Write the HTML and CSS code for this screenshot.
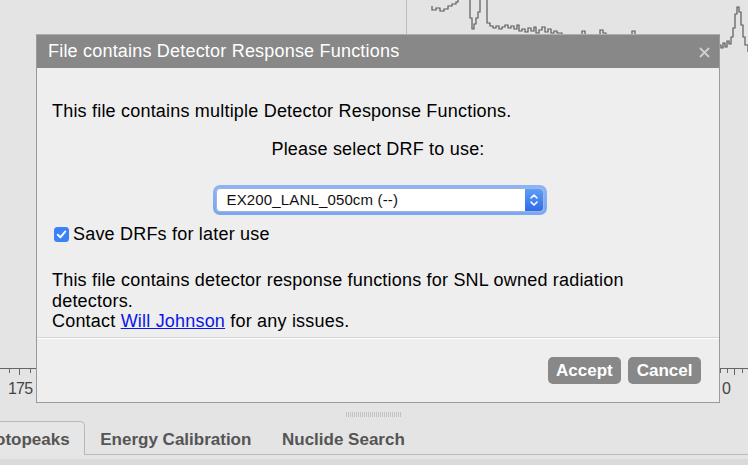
FILE: index.html
```html
<!DOCTYPE html>
<html>
<head>
<meta charset="utf-8">
<link rel="stylesheet" href="styles.css">
</head>
<body>
<div class="app">
  <div class="chart">
    <svg class="plot" width="748" height="407" viewBox="0 0 748 407">
      <line x1="406.5" y1="0" x2="406.5" y2="40" class="grid"/>
      <path class="spectrum" d="M432,6 V10 H436 V8 H440 V11 H444 V9 H448 V6 H452 V4 H456 V2 H458 V0
        M470,0 V18 H472 V29 H474 V24 H476 V18 H478 V12 H480 V0
        M487,0 V23 H490 V26 H493 V28 H496 V26 H499 V29 H502 V27 H505 V25 H508 V28 H511 V26 H514 V29 H517 V25 H519 V31 H522 V29 H525 V32 H528 V28 H531 V31 H534 V27 H536 V33 H539 V30 H542 V27 H545 V32 H548 V29 H551 V33 H554 V31 H557 V33 H562 V34
        M582,34 V31 H585 V34 M600,34 V30 H603 V33 H606 V34 M632,34 V31 H635 V34
        M719,45 H721 V48 H723 V43 H725 V47 H727 V41 H729 V44 H731 V37 H733 V28 H735 V14 H737 V7 H739 V12 H741 V25 H743 V37 H745 V45 H748 V52"/>
      <line x1="0" y1="368.5" x2="748" y2="368.5" class="axis"/>
      <path class="axis" d="M9.5,368 V373 M19.5,368 V375 M30.5,368 V373 M720.5,368 V373 M727.5,368 V373 M734.5,368 V375 M742.5,368 V373"/>
      <text x="8" y="394" class="tick-label">175</text>
      <text x="722" y="394" class="tick-label">0</text>
    </svg>
  </div>
  <div class="resizer"><div class="grip"></div></div>
  <div class="tabbar">
    <div class="tabs">
      <div class="tab active">Photopeaks</div>
      <div class="tab">Energy Calibration</div>
      <div class="tab">Nuclide Search</div>
    </div>
  </div>
  <div class="statusband"></div>
</div>

<div class="dialog">
  <div class="dlg-header">
    <span class="dlg-title">File contains Detector Response Functions</span>
    <span class="dlg-close">
      <svg width="11" height="11" viewBox="0 0 11 11"><path d="M1,1 L10,10 M10,1 L1,10" stroke="#cfcfcf" stroke-width="1.8" fill="none"/></svg>
    </span>
  </div>
  <div class="dlg-body">
    <p class="intro">This file contains multiple Detector Response Functions.</p>
    <p class="prompt">Please select DRF to use:</p>
    <div class="select-row">
      <div class="select-ring">
        <div class="select">
          <span class="select-value">EX200_LANL_050cm (--)</span>
          <span class="select-arrows">
            <svg width="18" height="22" viewBox="0 0 18 22"><path d="M6,9 L9,6 L12,9 M6,13 L9,16 L12,13" stroke="#fff" stroke-width="1.6" fill="none" stroke-linecap="round" stroke-linejoin="round"/></svg>
          </span>
        </div>
      </div>
    </div>
    <label class="check-row">
      <span class="checkbox"><svg width="15" height="15" viewBox="0 0 15 15"><path d="M3.8,7.8 L6.3,10.3 L11.2,4.6" stroke="#fff" stroke-width="2" fill="none" stroke-linecap="round" stroke-linejoin="round"/></svg></span>
      <span>Save DRFs for later use</span>
    </label>
    <p class="note">This file contains detector response functions for SNL owned radiation detectors.<br>Contact <a href="#" class="link">Will Johnson</a> for any issues.</p>
  </div>
  <div class="dlg-footer">
    <button class="btn">Accept</button>
    <button class="btn">Cancel</button>
  </div>
</div>
</body>
</html>
```

FILE: styles.css
```css
html, body {
  margin: 0;
  padding: 0;
}
body {
  width: 748px;
  height: 465px;
  overflow: hidden;
  background: #e4e4e4;
  font-family: "Liberation Sans", Arial, sans-serif;
  position: relative;
}
.app {
  display: flex;
  flex-direction: column;
  height: 465px;
}
.chart {
  height: 407px;
}
.plot {
  display: block;
}
.grid {
  stroke: #bdbdbd;
  stroke-width: 1;
}
.spectrum {
  fill: none;
  stroke: #5a5a5a;
  stroke-width: 1.2;
}
.axis {
  stroke: #666;
  stroke-width: 1;
  fill: none;
}
.tick-label {
  font-family: "Liberation Sans", Arial, sans-serif;
  font-size: 16px;
  letter-spacing: -0.8px;
  fill: #444;
}
.resizer {
  height: 14px;
  display: flex;
  justify-content: center;
}
.grip {
  margin-top: 5px;
  width: 56px;
  height: 5px;
  background: repeating-linear-gradient(90deg, #c2c2c2 0 1px, transparent 1px 2px);
}
.tabbar {
  height: 33px;
  border-bottom: 1px solid #bcbcbc;
  overflow: visible;
}
.tabs {
  display: flex;
  margin-left: -42px;
}
.tab {
  box-sizing: border-box;
  height: 33px;
  padding: 8px 14.3px 0;
  border: 1px solid transparent;
  border-bottom: none;
  font-size: 17px;
  font-weight: bold;
  line-height: 20px;
  color: #555;
  white-space: nowrap;
}
.tab.active {
  height: 34px;
  margin-bottom: -1px;
  background: #e6e6e6;
  border-color: #b8b8b8;
  border-radius: 0 5px 0 0;
}
.statusband {
  flex: 1;
  border-top: 4px solid #e4e4e4;
  background: #dadada;
}

/* dialog */
.dialog {
  position: absolute;
  left: 36px;
  top: 34px;
  width: 684px;
  box-sizing: border-box;
  border: 1px solid #9a9a9a;
  border-top-color: #adadad;
  background: #eeeeee;
  color: #000;
}
.dlg-header {
  height: 33px;
  background: #888888;
  display: flex;
  align-items: center;
  justify-content: space-between;
  padding: 0 9px 0 11px;
}
.dlg-title {
  color: #fff;
  font-size: 18px;
  letter-spacing: 0.2px;
  line-height: 33px;
}
.dlg-close {
  display: flex;
  margin-top: 1px;
}
.dlg-body {
  box-sizing: border-box;
  height: 270px;
  border-bottom: 1px solid #d2d2d2;
  padding: 0 15px;
  display: flex;
  flex-direction: column;
  font-size: 18px;
  letter-spacing: 0.2px;
  line-height: 20.5px;
}
.dlg-body p {
  margin: 0;
}
.intro {
  margin-top: 33px !important;
}
.prompt {
  margin-top: 17px !important;
  text-align: center;
}
.select-row {
  margin-top: 26px;
  display: flex;
  justify-content: center;
  padding-left: 3px;
}
.select-ring {
  width: 334px;
  box-sizing: border-box;
  padding: 3px;
  border-radius: 7px;
  background: linear-gradient(#8db5f6, #7aa7f2);
}
.select {
  display: flex;
  height: 24px;
  box-sizing: border-box;
  border: 1px solid #a3b3d3;
  border-radius: 4px;
  background: #fff;
  overflow: hidden;
}
.select-value {
  padding-left: 10px;
  font-size: 15px;
  letter-spacing: 0.15px;
  line-height: 22px;
  color: #111;
}
.select-arrows {
  margin-left: auto;
  width: 18px;
  height: 22px;
  display: flex;
  background: linear-gradient(#5d9ef9, #2d6ce9);
}
.check-row {
  margin-top: 8.5px;
  display: flex;
  align-items: center;
  height: 20.5px;
}
.checkbox {
  width: 15px;
  height: 15px;
  margin: 2px 4px 0 2px;
  border-radius: 3.5px;
  background: #3a82f7;
  display: flex;
}
.note {
  margin-top: 26px !important;
}
.link {
  color: #0b16e6;
  text-decoration: underline;
}
.dlg-footer {
  height: 64px;
  box-sizing: border-box;
  border-top: 1px solid #ffffff;
  padding: 18px 18px 0 0;
  display: flex;
  justify-content: flex-end;
  gap: 7px;
}
.btn {
  height: 27px;
  padding: 0 8.5px;
  border: none;
  border-radius: 5px;
  background: #888888;
  color: #fff;
  font-family: "Liberation Sans", Arial, sans-serif;
  font-size: 17px;
  font-weight: bold;
  line-height: 27px;
}
```
